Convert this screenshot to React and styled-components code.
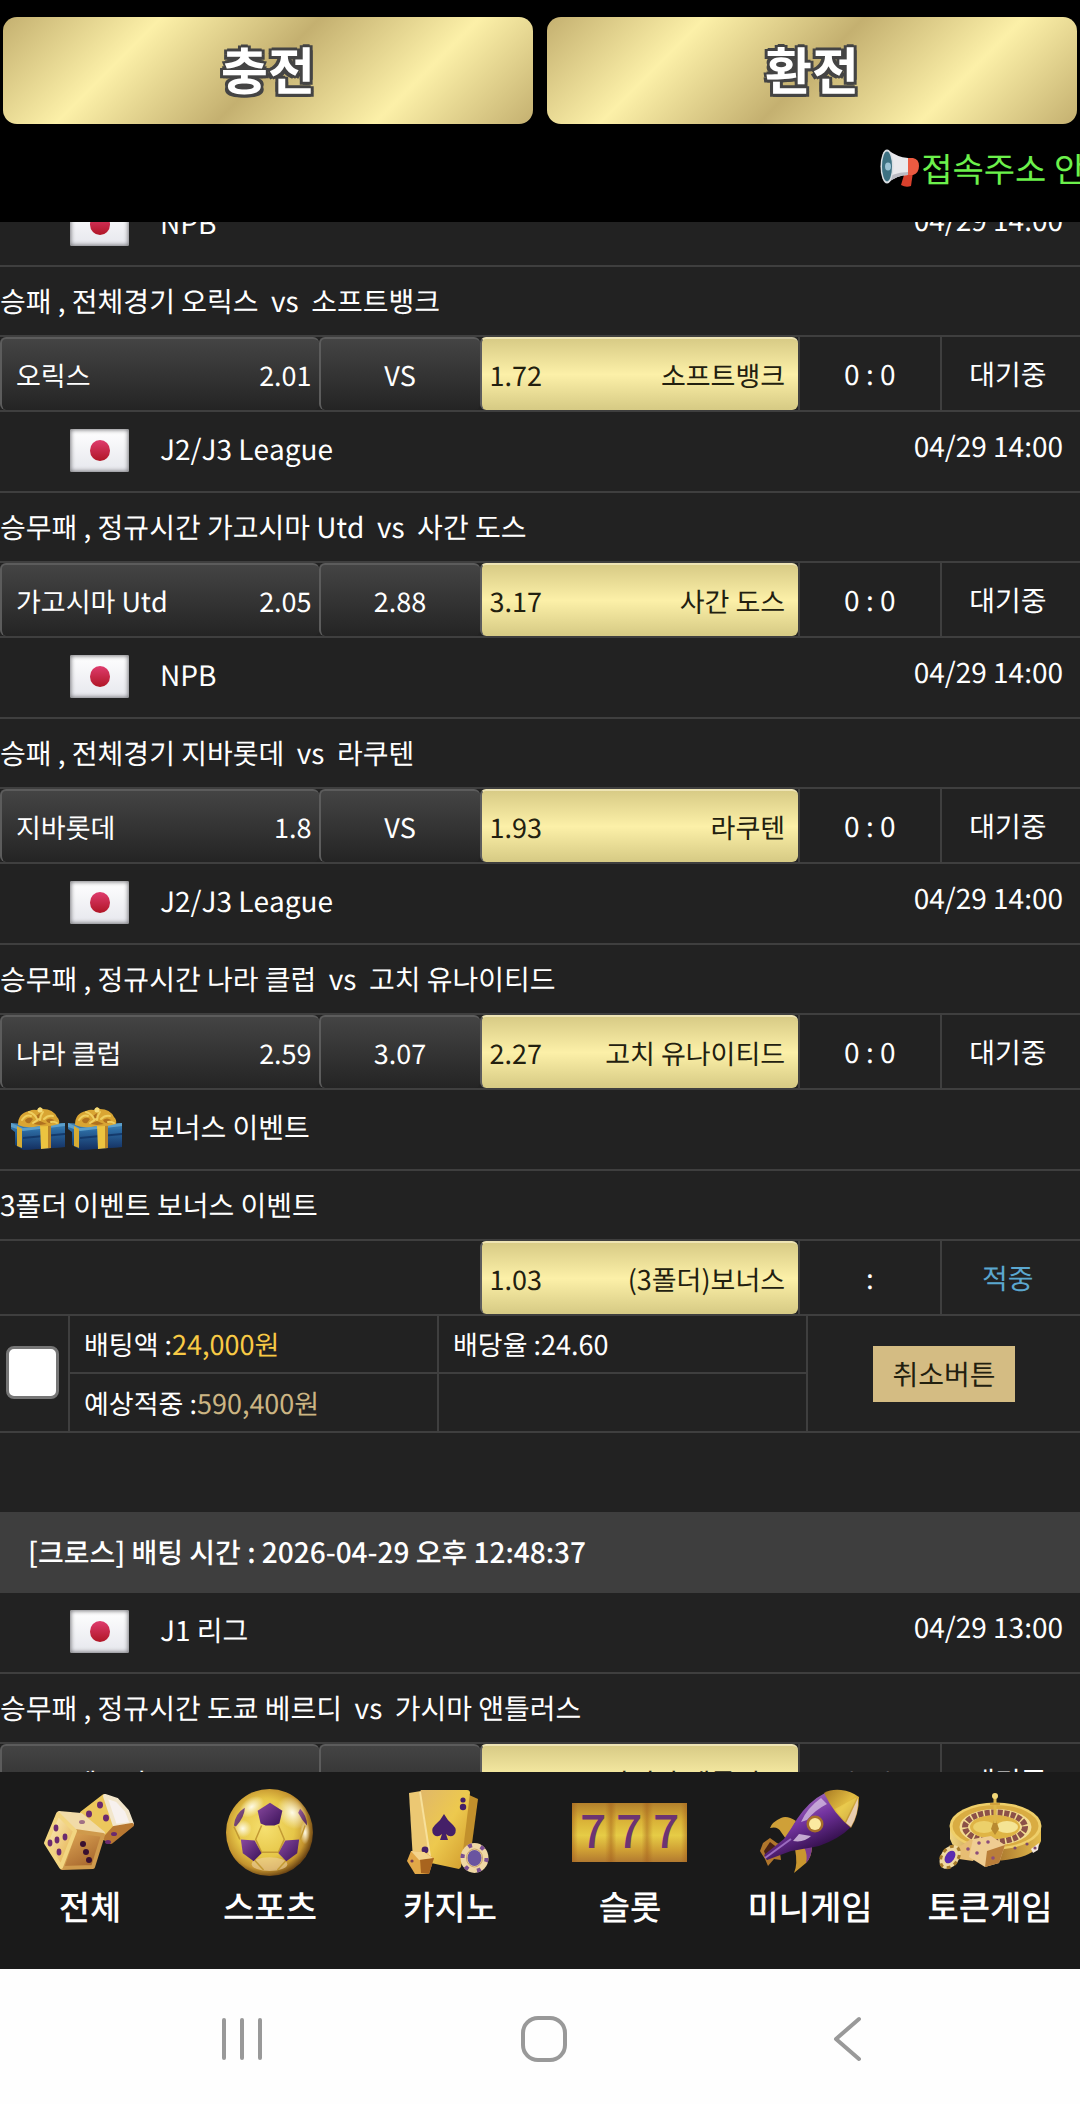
import { useLayoutEffect, useRef } from 'react';
import styled, { createGlobalStyle, css } from 'styled-components';

const color = {
  page: '#222222',
  line: '#3f3f3f',
  edge: '#5c5c5c',
  nav: '#1a1a1a',
  white: '#ffffff',
  dark: '#22200f',
  amount: '#f8ca45',
  expect: '#ccb583',
  win: '#5ba7cf',
  notice: '#6cf14c',
  tan: '#d4bc83',
  system: '#999999',
};

const fontType = {
  base: css`
    font-size: 28px;
    line-height: 40px;
  `,
  compact: css`
    font-size: 27px;
    line-height: 40px;
  `,
  nav: css`
    font-size: 34px;
    line-height: 50px;
  `,
};

const GlobalStyle = createGlobalStyle`
  * {
    box-sizing: border-box;
  }
  body {
    margin: 0;
    background: ${color.page};
    color: ${color.white};
    font-family: 'Noto Sans CJK KR', 'Noto Sans', sans-serif;
    font-kerning: none;
    text-rendering: geometricPrecision;
    ${fontType.base};
  }
  button {
    font-family: inherit;
    text-rendering: inherit;
    border: 0;
    padding: 0;
    cursor: pointer;
  }
`;

const Screen = styled.div`
  display: flex;
  flex-direction: column;
  height: 100vh;
  overflow: hidden;
`;

const Header = styled.header`
  flex: none;
  padding-top: 17px;
  background: #000;
`;

const WalletButtons = styled.div`
  display: flex;
  gap: 14px;
  padding: 0 3px;
`;

const WalletButton = styled.button`
  flex: 1;
  height: 107px;
  padding-bottom: 5px;
  border-radius: 14px;
  color: ${color.white};
  font-size: 51px;
  line-height: 70px;
  font-weight: 700;
  background: linear-gradient(
    135deg,
    #c4b070,
    #fcf0a8 25%,
    #c4b070 50%,
    #fcf0a8 75%,
    #c4b070
  );
  text-shadow:
    -3px -2px 0 #444,
    3px -2px 0 #444,
    -3px 3px 0 #444,
    3px 3px 0 #444,
    0 -3px 0 #444,
    0 3px 0 #444;
`;

const Notice = styled.div`
  display: flex;
  align-items: center;
  gap: 2px;
  height: 98px;
  padding: 0 0 10px 81.5%;
  overflow: hidden;
  white-space: nowrap;
  color: ${color.notice};
  ${fontType.nav};
  svg {
    flex: none;
  }
`;

const History = styled.main`
  flex: 1;
  min-height: 0;
  overflow-y: auto;
  scrollbar-width: none;
`;

const LeagueRow = styled.div`
  display: flex;
  align-items: center;
  gap: ${({ $event }) => ($event ? '27px' : '31px')};
  height: 81px;
  padding: 0 17px 2px ${({ $event }) => ($event ? '11px' : '70px')};
  border-bottom: 2px solid ${color.line};
`;

const Icons = styled.div`
  display: flex;
  gap: 3px;
`;

const Flag = styled.span`
  display: flex;
  align-items: center;
  justify-content: center;
  width: 59px;
  height: 43px;
  border-radius: 2px;
  background: linear-gradient(#ffffff, #e6e7ed);
  box-shadow: inset 0 0 4px 1px #77777b;
  &::after {
    content: '';
    width: 20px;
    height: 21px;
    border-radius: 50%;
    background: linear-gradient(#df3c6e, #b01626);
  }
`;

const LeagueName = styled.span`
  padding-bottom: 4px;
`;

const MatchTime = styled.time`
  margin-left: auto;
  padding-bottom: 10px;
`;

const MatchTitle = styled.div`
  display: flex;
  align-items: center;
  height: 70px;
  border-bottom: 2px solid ${color.line};
  white-space: pre;
`;

const OddsTable = styled.table`
  width: 100%;
  table-layout: fixed;
  border-spacing: 0;
  border-bottom: 2px solid ${color.line};
  td {
    height: 73px;
    padding: 0;
    text-align: center;
  }
`;

const Col = styled.col`
  width: ${({ $width }) => $width};
`;

const Pick = styled.div`
  display: flex;
  align-items: center;
  justify-content: space-between;
  height: 73px;
  padding: 0 7px 0 14px;
  border-top: 2px solid ${color.edge};
  border-left: 2px solid ${color.edge};
  border-radius: 6px;
  background: linear-gradient(#444444, #242424);
  white-space: nowrap;
  ${fontType.compact};
`;

const DrawPick = styled(Pick)`
  justify-content: center;
  padding: 0;
`;

const SelectedPick = styled(Pick)`
  padding: 0 13px 0 8px;
  color: ${color.dark};
  border-top-color: #eee4b4;
  background: linear-gradient(#d8cb86, #fcf0a8 50%, #d6ca84);
`;

const ScoreCell = styled.td`
  border-left: 2px solid ${color.line};
`;

const StatusCell = styled(ScoreCell)`
  color: ${({ $win }) => ($win ? color.win : color.white)};
  && {
    padding-right: 6px;
  }
`;

const Summary = styled.section`
  display: grid;
  grid-template-columns: 70px 369fr 369fr 272fr;
  grid-template-rows: 58px 57px;
  border-bottom: 2px solid ${color.line};
`;

const SummaryCheck = styled.label`
  display: flex;
  align-items: center;
  grid-row: 1 / 3;
  padding: 0 0 3px 6px;
  border-right: 2px solid ${color.line};
`;

const CheckBox = styled.input`
  appearance: none;
  width: 53px;
  height: 53px;
  margin: 0;
  border: 3px solid #767676;
  border-radius: 8px;
  background: ${color.white};
  &:checked {
    background: ${color.tan};
  }
`;

const SummaryItem = styled.div`
  display: flex;
  align-items: center;
  padding-left: 14px;
  border-right: 2px solid ${color.line};
  border-bottom: ${({ $last }) => ($last ? 0 : 2)}px solid ${color.line};
  white-space: pre;
  ${fontType.compact};
`;

const Amount = styled.span`
  color: ${({ $color }) => $color};
`;

const SummaryAction = styled.div`
  display: flex;
  align-items: center;
  justify-content: center;
  grid-column: 4;
  grid-row: 1 / 3;
`;

const CancelButton = styled.button`
  height: 56px;
  padding: 0 19px;
  background: ${color.tan};
  color: ${color.dark};
  ${fontType.base};
`;

const BetTime = styled.h2`
  display: flex;
  align-items: center;
  height: 81px;
  margin: 79px 0 0;
  padding: 0 0 1px 28px;
  background: #3e3e3e;
  font-weight: 500;
  ${fontType.base};
`;

const TabBar = styled.nav`
  display: grid;
  grid-template-columns: repeat(6, 1fr);
  flex: none;
  height: 197px;
  padding-top: 16px;
  background: ${color.nav};
`;

const Tab = styled.a`
  display: flex;
  flex-direction: column;
  align-items: center;
  gap: 5px;
  color: ${color.white};
  font-weight: 500;
  text-decoration: none;
  white-space: nowrap;
  ${fontType.nav};
`;

const TabIcon = styled.span`
  display: flex;
  align-items: center;
  justify-content: center;
  height: 88px;
  padding-right: 2px;
`;

const SystemBar = styled.footer`
  display: grid;
  grid-template-columns: repeat(3, 1fr);
  flex: none;
  height: 135px;
  padding: 5px 82px 0 91px;
  background: #fefefe;
`;

const SystemButton = styled.button`
  display: flex;
  align-items: center;
  justify-content: center;
  background: none;
  color: ${color.system};
`;

const MegaphoneIcon = () => (
  <svg width="39" height="38" viewBox="0 0 39 38" aria-hidden="true">
    <path d="M24 26 33 23 31 37Q26 39 21 36Z" fill="#d8402c" />
    <path d="M27 9h6q6 1 6 8t-6 9h-6z" fill="#ec5a41" />
    <path d="M8 1q9 7 20 8v17q-11 0-20 8z" fill="#e9e9ec" />
    <path d="M12 26q8-3 16-3v3q-11 0-20 8z" fill="#bcbcc4" />
    <ellipse cx="7" cy="17.5" rx="6.5" ry="17" fill="#d9dee2" />
    <ellipse cx="7" cy="17.5" rx="5" ry="15" fill="#3d7182" />
    <ellipse cx="8" cy="17.5" rx="3" ry="4" fill="#9cc3d4" />
  </svg>
);

const GiftIcon = () => (
  <svg width="54" height="43" viewBox="0 0 54 43" aria-hidden="true">
    <defs>
      <linearGradient id="giftBox" x1="0" y1="0" x2="0" y2="1">
        <stop offset="0" stopColor="#3f83b8" />
        <stop offset="0.5" stopColor="#1f5a92" />
        <stop offset="1" stopColor="#12305c" />
      </linearGradient>
      <linearGradient id="giftFront" x1="0" y1="0" x2="0" y2="1">
        <stop offset="0" stopColor="#2d6ea6" />
        <stop offset="1" stopColor="#142f60" />
      </linearGradient>
    </defs>
    <path d="M0 16 27 18 54 16V27L54 28V40L12 43 4 38V25L0 22Z" fill="url(#giftBox)" />
    <path d="M0 16 12 21 54 16 54 19 12 24 0 20Z" fill="#5c9fca" />
    <path d="M12 25 54 22V40L12 43Z" fill="url(#giftFront)" />
    <path d="M12 30 54 26V28L12 32Z" fill="#143a6c" />
    <path d="M6 19 11 22 11 41 6 39Z" fill="#d6ac34" />
    <path d="M29 18H40V41L30 42Z" fill="#ecc440" />
    <path d="M37 18H40V41H37Z" fill="#b9842a" />
    <path d="M7 18Q7 6 18 4 22 2 26 3L29 0 32 2Q42 2 46 10 49 13 48 17 38 20 28 19 16 22 7 18Z" fill="#d9a533" />
    <g fill="#b0711f">
      <path d="M14 13Q18 9 22 12L19 16Q15 17 14 13Z" />
      <path d="M25 9 29 6 28 14Z" />
      <path d="M35 13Q39 10 43 13L41 16Q37 17 35 13Z" />
      <path d="M22 17 29 14 36 17 29 18Z" />
    </g>
    <g fill="none" strokeLinecap="round" stroke="#efcf60" strokeWidth="2">
      <path d="M11 13q4-6 9-4M18 5q6 2 8 7M32 5q-3 4-3 8M42 9q-5-1-9 3M22 16l6-4M46 16q-3-2-6-1" />
    </g>
    <circle cx="29" cy="3" r="2.5" fill="#f3dc7c" />
  </svg>
);

const DiceIcon = () => (
  <svg width="92" height="78" viewBox="0 0 92 78" aria-hidden="true">
    <defs>
      <linearGradient id="diceLeft" x1="0" y1="0" x2="1" y2="1">
        <stop offset="0" stopColor="#fdf3c8" />
        <stop offset="1" stopColor="#e2a93e" />
      </linearGradient>
      <linearGradient id="diceRight" x1="0" y1="0" x2="0.6" y2="1">
        <stop offset="0" stopColor="#e2ab58" />
        <stop offset="1" stopColor="#a8682e" />
      </linearGradient>
    </defs>
    <g strokeLinejoin="round" strokeWidth="4">
      <path d="M39 20 61 3 71 33 66 47 48 40Z" fill="#ecc75c" stroke="#ecc75c" />
      <path d="M62 3 74 7 84 18 89 31 72 33Z" fill="#f7f1ee" stroke="#f2e6cc" />
      <path d="M71 35 89 32 68 49 62 45Z" fill="#b87832" stroke="#b87832" />
      <path d="M16 20 38 22 60 40 32 38Z" fill="#f1dba8" stroke="#f1dba8" />
      <path d="M32 38 60 42 50 74 19 75Z" fill="url(#diceRight)" stroke="#cf9a4c" />
      <path d="M15 21 32 38 18 74 3 50Z" fill="url(#diceLeft)" stroke="#f2d581" />
    </g>
    <g fill="#6b2a6e">
      <ellipse cx="13" cy="35" rx="2.4" ry="3.4" />
      <ellipse cx="22" cy="44" rx="2.4" ry="3.4" />
      <ellipse cx="14" cy="47" rx="2.4" ry="3.4" />
      <ellipse cx="7" cy="50" rx="2.4" ry="3.4" />
      <ellipse cx="16" cy="59" rx="2.4" ry="3.4" />
      <ellipse cx="57" cy="12" rx="3" ry="3.4" />
      <ellipse cx="46" cy="21" rx="3" ry="3.4" />
      <ellipse cx="63" cy="25" rx="3" ry="3.4" />
      <ellipse cx="39" cy="29" rx="3" ry="2" opacity="0.6" />
      <ellipse cx="71" cy="41" rx="3" ry="2" />
      <ellipse cx="65" cy="49" rx="3" ry="2" />
    </g>
    <g fill="#3a1030">
      <ellipse cx="40" cy="51" rx="3" ry="3" />
      <ellipse cx="43" cy="59" rx="3" ry="3" />
      <ellipse cx="46" cy="67" rx="3" ry="3" />
    </g>
  </svg>
);

const BallIcon = () => (
  <svg width="87" height="87" viewBox="0 0 88 88" aria-hidden="true">
    <defs>
      <radialGradient id="ball" cx="0.45" cy="0.45" r="0.56">
        <stop offset="0" stopColor="#f6e070" />
        <stop offset="0.6" stopColor="#e6c648" />
        <stop offset="0.85" stopColor="#c4932e" />
        <stop offset="1" stopColor="#6d4614" />
      </radialGradient>
      <radialGradient id="shine">
        <stop offset="0" stopColor="#fffbe6" />
        <stop offset="1" stopColor="#fffbe6" stopOpacity="0" />
      </radialGradient>
      <linearGradient id="patch" x1="0" y1="0" x2="1" y2="1">
        <stop offset="0" stopColor="#8a4aa0" />
        <stop offset="1" stopColor="#3a1258" />
      </linearGradient>
    </defs>
    <circle cx="44" cy="44" r="44" fill="url(#ball)" />
    <ellipse cx="67" cy="24" rx="14" ry="18" fill="url(#shine)" transform="rotate(-35 67 24)" />
    <ellipse cx="26" cy="18" rx="14" ry="9" fill="url(#shine)" transform="rotate(-35 26 18)" />
    <ellipse cx="17" cy="40" rx="9" ry="9" fill="url(#shine)" />
    <ellipse cx="80" cy="44" rx="5" ry="12" fill="url(#shine)" />
    <ellipse cx="44" cy="76" rx="18" ry="7" fill="#f0d3a0" opacity="0.6" />
    <g fill="none" stroke="#c39a34" strokeWidth="1.5">
      <path d="M36 37 30 51 36 64H53L59 51 53 37M14 51 8 38M75 51 80 37M29 72 38 82M61 72 52 82" />
    </g>
    <g fill="url(#patch)">
      <path d="M44.5 14 57 22 54 35 49 37H40L35 35 32 22Z" />
      <path d="M15 51 29 52 36 65 28 73 17 65Z" />
      <path d="M74 51 60 52 53 65 61 73 72 65Z" />
      <path d="M8 37Q9 25 19 19 19 28 10 38Z" opacity="0.85" />
      <path d="M75 20Q82 27 82 37 77 32 73 24Z" opacity="0.85" />
    </g>
  </svg>
);

const CardsIcon = () => (
  <svg width="84" height="86" viewBox="0 0 84 86" aria-hidden="true">
    <defs>
      <linearGradient id="card" x1="0" y1="0" x2="1" y2="1">
        <stop offset="0" stopColor="#e0b76a" />
        <stop offset="0.5" stopColor="#edc94e" />
        <stop offset="1" stopColor="#d09a2c" />
      </linearGradient>
    </defs>
    <path d="M2 4 14 2 28 74 6 72Z" fill="#ecc873" />
    <path d="M60 5 71 10 64 62 52 78Z" fill="#c2902c" />
    <path d="M14 1H60Q63 1 63 4L54 78 52 80 24 74 12 4Z" fill="url(#card)" />
    <path d="M13 3 24 74" stroke="#f7e09a" strokeWidth="2" />
    <g fill="#452068">
      <path d="M37 25Q40 31 46 36 51 41 47 46 43 49 39 45L41 51H33L35 45Q31 49 27 46 23 41 28 36 34 31 37 25Z" />
      <circle cx="56" cy="11" r="2.6" />
      <circle cx="56" cy="18" r="3.2" />
      <circle cx="18" cy="61" r="3.4" />
    </g>
    <path d="M0 72 4 62 17 63 27 69 22 85 8 85Z" fill="#e2a848" />
    <path d="M13 70 27 69 22 85 14 84Z" fill="#a8641e" />
    <path d="M4 62 17 63 26 69 12 71Z" fill="#f4d48c" />
    <circle cx="5" cy="72" r="1.6" fill="#7a3c50" />
    <ellipse cx="67.5" cy="69" rx="14" ry="15" fill="#efd7a4" />
    <ellipse cx="67.5" cy="69" rx="12" ry="13" fill="none" stroke="#7a4f92" strokeWidth="4" strokeDasharray="4 9" />
    <ellipse cx="67.5" cy="69" rx="7" ry="8" fill="#6a54a0" />
    <ellipse cx="67.5" cy="69" rx="8" ry="9" fill="none" stroke="#c9a26a" />
  </svg>
);

const SlotIcon = () => (
  <svg width="115" height="59" viewBox="0 0 115 59" aria-hidden="true">
    <defs>
      <linearGradient id="reel" x1="0" y1="0" x2="0" y2="1">
        <stop offset="0" stopColor="#b3802c" />
        <stop offset="0.3" stopColor="#d9b237" />
        <stop offset="0.55" stopColor="#e6cc46" />
        <stop offset="0.8" stopColor="#cf9f34" />
        <stop offset="1" stopColor="#b27a30" />
      </linearGradient>
      <linearGradient id="reelSide">
        <stop offset="0" stopColor="#a45f1c" stopOpacity="0.5" />
        <stop offset="0.15" stopColor="#a45f1c" stopOpacity="0" />
        <stop offset="0.85" stopColor="#a45f1c" stopOpacity="0" />
        <stop offset="1" stopColor="#a45f1c" stopOpacity="0.5" />
      </linearGradient>
    </defs>
    <rect width="115" height="59" fill="url(#reel)" />
    <rect width="39" height="59" fill="url(#reelSide)" />
    <rect x="39" width="36" height="59" fill="url(#reelSide)" />
    <rect x="75" width="40" height="59" fill="url(#reelSide)" />
    <g fill="#6c3472" fontSize="46" fontWeight="500" textAnchor="middle">
      <text x="21" y="45">7</text>
      <text x="57" y="45">7</text>
      <text x="94" y="45">7</text>
    </g>
  </svg>
);

const RocketIcon = () => (
  <svg width="100" height="86" viewBox="0 0 100 86" aria-hidden="true">
    <defs>
      <linearGradient id="hull" x1="0.3" y1="0.2" x2="0.65" y2="0.8">
        <stop offset="0" stopColor="#9a62b8" />
        <stop offset="0.4" stopColor="#7434a0" />
        <stop offset="1" stopColor="#35104e" />
      </linearGradient>
      <linearGradient id="nose" x1="0" y1="0" x2="1" y2="1">
        <stop offset="0" stopColor="#a87a22" />
        <stop offset="0.5" stopColor="#e2bd42" />
        <stop offset="1" stopColor="#9c6624" />
      </linearGradient>
    </defs>
    <path d="M11 49 18 54 26 58 21 64 22 71 15 70 9 77 6 70 1 62 4 54Z" fill="#b0762c" />
    <path d="M11 53 20 60 14 66 8 71 5 62Z" fill="#4a2214" />
    <path d="M37 32Q28 26 22 29 13 33 11 39 19 37 22 43L27 50Z" fill="#cfa038" />
    <path d="M53 56Q53 68 47 74 41 79 35 84 39 75 36 60Z" fill="#c9962f" />
    <path d="M53 56Q53 68 47 74 49 66 45 58Z" fill="#7c3a92" />
    <path d="M66 4 92 38Q80 50 60 57 44 60 32 62L8 71 5 66 25 50Q32 40 38 30 50 12 66 4Z" fill="url(#hull)" />
    <path d="M62 9 68 15Q56 21 48 31L42 33Q48 19 62 9Z" fill="#d8c2e4" opacity="0.75" />
    <path d="M40 45 52 47Q45 54 34 52Z" fill="#e8d6ee" opacity="0.75" />
    <path d="M6 69 32 50" stroke="#9b6cc0" strokeWidth="2" />
    <path d="M65 4Q72 0 82 1 92 2 100 8 100 26 92 39 75 25 65 4Z" fill="url(#nose)" />
    <path d="M99 9Q100 24 92 38L87 34Q94 20 99 9Z" fill="#e9cdb0" />
    <path d="M98 8 76 20 86 33Z" fill="#f0d85a" opacity="0.5" />
    <circle cx="56" cy="35" r="8.5" fill="#a8702a" />
    <circle cx="56" cy="35" r="6" fill="#fbe9a0" />
  </svg>
);

const RouletteIcon = () => (
  <svg width="105" height="78" viewBox="0 0 105 78" aria-hidden="true">
    <defs>
      <linearGradient id="drum">
        <stop offset="0" stopColor="#efd481" />
        <stop offset="0.5" stopColor="#a8742c" />
        <stop offset="1" stopColor="#e4bd4e" />
      </linearGradient>
    </defs>
    <path d="M13 33V46Q20 68 58 68 98 66 104 48V33Z" fill="url(#drum)" />
    <ellipse cx="58.5" cy="33" rx="46" ry="23.5" fill="#efcf6a" />
    <ellipse cx="58.5" cy="33" rx="43" ry="21" fill="#d9ac42" />
    <ellipse cx="58.5" cy="34" rx="36" ry="18" fill="#f3dc92" />
    <ellipse cx="58" cy="34" rx="30" ry="14.5" fill="none" stroke="#8c5148" strokeWidth="6" strokeDasharray="5 1.5" />
    <ellipse cx="58" cy="34" rx="25" ry="12" fill="#dfb445" />
    <ellipse cx="47" cy="34" rx="11" ry="6" fill="#ecd06a" />
    <ellipse cx="70" cy="34" rx="11" ry="6" fill="#f5e494" />
    <path d="M58 24 62 36 58 42 54 36Z" fill="#b98a30" />
    <path d="M58 4V30" stroke="#ddb64a" strokeWidth="3" />
    <circle cx="58" cy="3" r="3" fill="#f2d778" />
    <path d="M53 11H63" stroke="#d0a03c" strokeWidth="2" fill="none" />
    <path d="M94 56 102 50 101 57 96 60Z" fill="#f5e9df" />
    <g fill="#7b4a6a">
      <circle cx="78" cy="55" r="1.6" />
      <circle cx="90" cy="51" r="1.6" />
      <circle cx="98" cy="55" r="1.6" />
    </g>
    <path d="M22 54 34 46 46 54 36 68 22 66Z" fill="#e7bd73" />
    <path d="M36 46 54 43 68 52 62 70 48 74 32 64Z" fill="#efcd92" />
    <path d="M50 58 68 52 62 70 48 74Z" fill="#b97e3a" />
    <g fill="#8b4d7c">
      <circle cx="42" cy="50" r="1.8" />
      <circle cx="51" cy="49" r="1.8" />
      <circle cx="40" cy="60" r="1.8" />
      <circle cx="31" cy="56" r="1.8" />
      <circle cx="56" cy="65" r="1.8" />
    </g>
    <g transform="rotate(35 13 64)">
      <ellipse cx="13" cy="64" rx="9" ry="13" fill="#f0d9a0" />
      <ellipse cx="13" cy="64" rx="8" ry="12" fill="none" stroke="#a87c2c" strokeWidth="3" strokeDasharray="4 4" />
      <ellipse cx="13" cy="64" rx="4.5" ry="7" fill="#5b2bb0" />
    </g>
  </svg>
);

const RecentIcon = () => (
  <svg width="42" height="46" viewBox="0 0 42 46" aria-hidden="true">
    <path d="M3 4V42M21 4V42M39 4V42" stroke="currentColor" strokeWidth="4" strokeLinecap="round" />
  </svg>
);

const HomeIcon = () => (
  <svg width="46" height="46" viewBox="0 0 46 46" aria-hidden="true">
    <rect x="2" y="2" width="42" height="42" rx="15" fill="none" stroke="currentColor" strokeWidth="4" />
  </svg>
);

const BackIcon = () => (
  <svg width="30" height="46" viewBox="0 0 30 46" aria-hidden="true">
    <path d="M27 3 4 23 27 43" fill="none" stroke="currentColor" strokeWidth="4" strokeLinecap="round" strokeLinejoin="round" />
  </svg>
);

const crossBet = [
  {
    id: 1,
    league: 'NPB',
    time: '04/29 14:00',
    title: '승패 , 전체경기 오릭스  vs  소프트뱅크',
    home: ['오릭스', '2.01'],
    draw: 'VS',
    away: ['소프트뱅크', '1.72'],
  },
  {
    id: 2,
    league: 'J2/J3 League',
    time: '04/29 14:00',
    title: '승무패 , 정규시간 가고시마 Utd  vs  사간 도스',
    home: ['가고시마 Utd', '2.05'],
    draw: '2.88',
    away: ['사간 도스', '3.17'],
  },
  {
    id: 3,
    league: 'NPB',
    time: '04/29 14:00',
    title: '승패 , 전체경기 지바롯데  vs  라쿠텐',
    home: ['지바롯데', '1.8'],
    draw: 'VS',
    away: ['라쿠텐', '1.93'],
  },
  {
    id: 4,
    league: 'J2/J3 League',
    time: '04/29 14:00',
    title: '승무패 , 정규시간 나라 클럽  vs  고치 유나이티드',
    home: ['나라 클럽', '2.59'],
    draw: '3.07',
    away: ['고치 유나이티드', '2.27'],
  },
  {
    id: 5,
    event: true,
    league: '보너스 이벤트',
    title: '3폴더 이벤트 보너스 이벤트',
    away: ['(3폴더)보너스', '1.03'],
    score: ':',
    status: '적중',
  },
];

const nextMatch = {
  league: 'J1 리그',
  time: '04/29 13:00',
  title: '승무패 , 정규시간 도쿄 베르디  vs  가시마 앤틀러스',
  home: ['도쿄 베르디', '3.05'],
  draw: '2.90',
  away: ['가시마 앤틀러스', '2.30'],
};

const tabs = [
  { name: '전체', icon: DiceIcon },
  { name: '스포츠', icon: BallIcon },
  { name: '카지노', icon: CardsIcon },
  { name: '슬롯', icon: SlotIcon },
  { name: '미니게임', icon: RocketIcon },
  { name: '토큰게임', icon: RouletteIcon },
];

const Match = ({
  event,
  league,
  time,
  title,
  home,
  draw,
  away,
  score = '0 : 0',
  status = '대기중',
}) => (
  <article>
    <LeagueRow $event={event}>
      <Icons>
        {event ? (
          <>
            <GiftIcon />
            <GiftIcon />
          </>
        ) : (
          <Flag />
        )}
      </Icons>
      <LeagueName>{league}</LeagueName>
      {time && <MatchTime>{time}</MatchTime>}
    </LeagueRow>
    <MatchTitle>{title}</MatchTitle>
    <OddsTable>
      <colgroup>
        <Col $width="29.5%" />
        <Col $width="14.9%" />
        <Col $width="29.5%" />
        <Col $width="13.1%" />
        <Col />
      </colgroup>
      <tbody>
        <tr>
          <td>
            {home && (
              <Pick>
                <span>{home[0]}</span>
                <span>{home[1]}</span>
              </Pick>
            )}
          </td>
          <td>{draw && <DrawPick>{draw}</DrawPick>}</td>
          <td>
            <SelectedPick>
              <span>{away[1]}</span>
              <span>{away[0]}</span>
            </SelectedPick>
          </td>
          <ScoreCell>{score}</ScoreCell>
          <StatusCell $win={status === '적중'}>{status}</StatusCell>
        </tr>
      </tbody>
    </OddsTable>
  </article>
);

const App = () => {
  const historyRef = useRef(null);

  useLayoutEffect(() => {
    historyRef.current.scrollTop = 36;
  }, []);

  return (
    <>
      <GlobalStyle />
      <Screen>
        <Header>
          <WalletButtons>
            <WalletButton type="button">충전</WalletButton>
            <WalletButton type="button">환전</WalletButton>
          </WalletButtons>
          <Notice>
            <MegaphoneIcon />
            <span>접속주소 안내</span>
          </Notice>
        </Header>
        <History ref={historyRef}>
          {crossBet.map((match) => (
            <Match key={match.id} {...match} />
          ))}
          <Summary>
            <SummaryCheck>
              <CheckBox type="checkbox" aria-label="배팅 선택" />
            </SummaryCheck>
            <SummaryItem>
              배팅액 :<Amount $color={color.amount}>24,000원</Amount>
            </SummaryItem>
            <SummaryItem>배당율 :24.60</SummaryItem>
            <SummaryAction>
              <CancelButton type="button">취소버튼</CancelButton>
            </SummaryAction>
            <SummaryItem $last>
              예상적중 :<Amount $color={color.expect}>590,400원</Amount>
            </SummaryItem>
            <SummaryItem $last />
          </Summary>
          <BetTime>[크로스] 배팅 시간 : 2026-04-29 오후 12:48:37</BetTime>
          <Match {...nextMatch} />
        </History>
        <TabBar>
          {tabs.map(({ name, icon: Icon }) => (
            <Tab key={name} href="#">
              <TabIcon>
                <Icon />
              </TabIcon>
              {name}
            </Tab>
          ))}
        </TabBar>
        <SystemBar>
          <SystemButton type="button" aria-label="최근 앱">
            <RecentIcon />
          </SystemButton>
          <SystemButton type="button" aria-label="홈">
            <HomeIcon />
          </SystemButton>
          <SystemButton type="button" aria-label="뒤로">
            <BackIcon />
          </SystemButton>
        </SystemBar>
      </Screen>
    </>
  );
};

export default App;
